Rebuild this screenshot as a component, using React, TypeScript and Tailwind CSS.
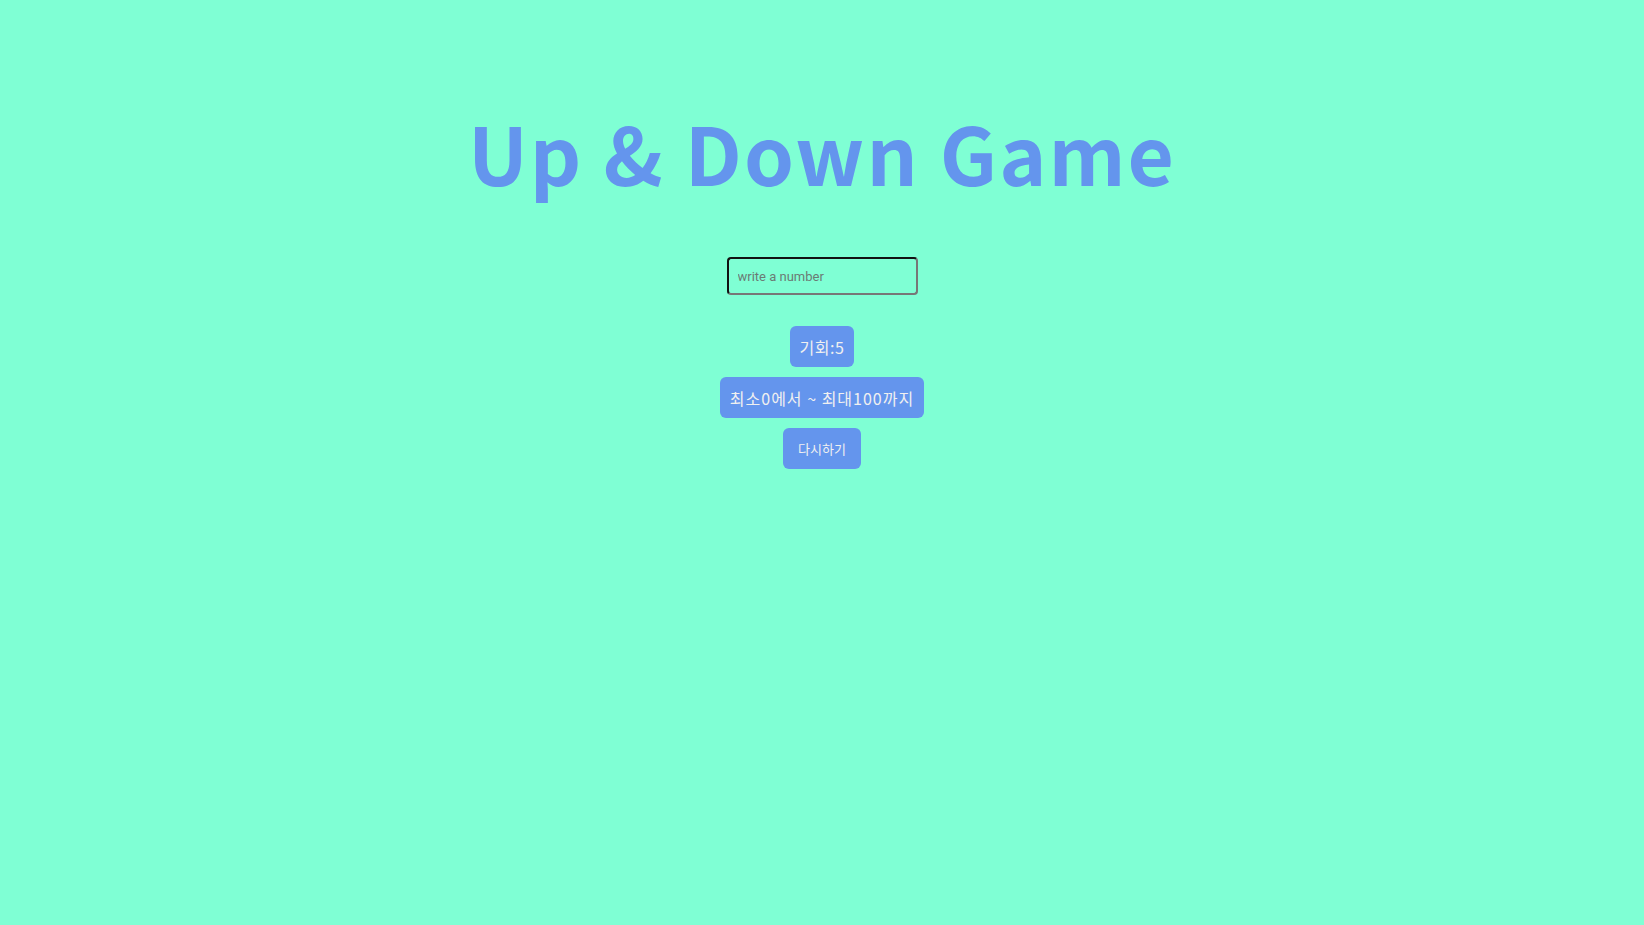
import React, { useState } from 'react';

const font = { fontFamily: '"Noto Sans CJK KR", "Noto Sans", sans-serif' };

const App = () => {
    const [value, setValue] = useState('');

    return (
        <div
            className="min-h-[925px] w-full bg-[#7fffd4] flex flex-col items-center"
            style={font}
        >
            <h1 className="mt-[111px] text-[80px] font-bold leading-none tracking-[2px] text-[#6495ed] [font-family:'Noto_Sans_CJK_KR',sans-serif]">
                Up &amp; Down Game
            </h1>
            <input
                type="text"
                value={value}
                onChange={(e) => setValue(e.target.value)}
                placeholder="write a number"
                className="mt-[66px] w-[191px] h-[38px] border-2 border-[#111] border-r-[#777] border-b-[#777] rounded-[4px] bg-transparent px-[9px] text-[13px] text-[#333] placeholder:text-[#6b7b75] outline-none [font-family:Roboto,sans-serif]"
            />
            <div className="mt-[31px] flex flex-col items-center gap-[10px]">
                <div className="h-[41px] px-[10px] flex items-center rounded-[6px] bg-[#6495ed] text-[16px] tracking-[0.5px] text-[#f0f0f0]">
                    기회:5
                </div>
                <div className="h-[41px] px-[10px] flex items-center rounded-[6px] bg-[#6495ed] text-[16px] tracking-[1px] text-[#f0f0f0]">
                    최소0에서 ~ 최대100까지
                </div>
                <button className="h-[41px] w-[78px] flex items-center justify-center rounded-[6px] bg-[#6495ed] text-[13px] text-[#f0f0f0]">
                    다시하기
                </button>
            </div>
        </div>
    );
};

export default App;
